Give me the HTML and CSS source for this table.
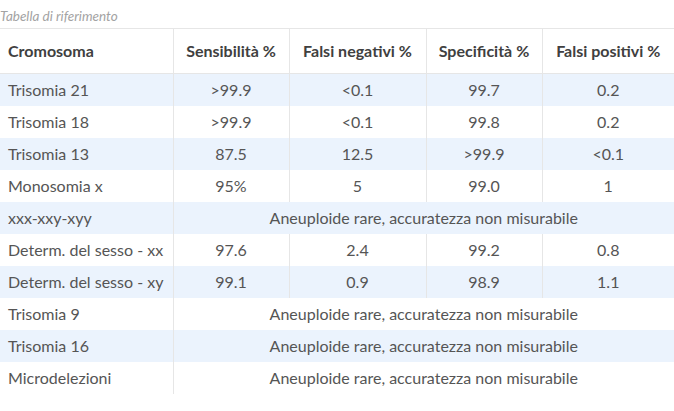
FILE: index.html
```html
<!DOCTYPE html>
<html lang="it">
<head>
<meta charset="utf-8">
<title>Tabella di riferimento</title>
<link rel="stylesheet" href="styles.css">
</head>
<body>
<table class="ref-table">
  <caption class="ref-caption">Tabella di riferimento</caption>
  <colgroup>
    <col class="c1"><col class="c2"><col class="c3"><col class="c4"><col class="c5">
  </colgroup>
  <thead>
    <tr>
      <th class="first">Cromosoma</th>
      <th>Sensibilità %</th>
      <th>Falsi negativi %</th>
      <th>Specificità %</th>
      <th>Falsi positivi %</th>
    </tr>
  </thead>
  <tbody>
    <tr><td class="first">Trisomia 21</td><td>&gt;99.9</td><td>&lt;0.1</td><td>99.7</td><td>0.2</td></tr>
    <tr><td class="first">Trisomia 18</td><td>&gt;99.9</td><td>&lt;0.1</td><td>99.8</td><td>0.2</td></tr>
    <tr><td class="first">Trisomia 13</td><td>87.5</td><td>12.5</td><td>&gt;99.9</td><td>&lt;0.1</td></tr>
    <tr><td class="first">Monosomia x</td><td>95%</td><td>5</td><td>99.0</td><td>1</td></tr>
    <tr><td class="first">xxx-xxy-xyy</td><td colspan="4">Aneuploide rare, accuratezza non misurabile</td></tr>
    <tr><td class="first">Determ. del sesso - xx</td><td>97.6</td><td>2.4</td><td>99.2</td><td>0.8</td></tr>
    <tr><td class="first">Determ. del sesso - xy</td><td>99.1</td><td>0.9</td><td>98.9</td><td>1.1</td></tr>
    <tr><td class="first">Trisomia 9</td><td colspan="4">Aneuploide rare, accuratezza non misurabile</td></tr>
    <tr><td class="first">Trisomia 16</td><td colspan="4">Aneuploide rare, accuratezza non misurabile</td></tr>
    <tr><td class="first">Microdelezioni</td><td colspan="4">Aneuploide rare, accuratezza non misurabile</td></tr>
  </tbody>
</table>
</body>
</html>
```
FILE: styles.css
```css
html, body {
  margin: 0;
  padding: 0;
  background: #ffffff;
}

body {
  font-family: Lato, "Open Sans", sans-serif;
  font-size: 16px;
  color: #555555;
}

.ref-table {
  width: 674px;
  border-collapse: collapse;
  table-layout: fixed;
}

.ref-caption {
  caption-side: top;
  text-align: left;
  font-style: italic;
  font-size: 13.5px;
  color: #a3a3a3;
  height: 28px;
  line-height: 32px;
  padding: 0;
  white-space: nowrap;
}

.c1 { width: 173px; }
.c2 { width: 116px; }
.c3 { width: 137px; }
.c4 { width: 116px; }
.c5 { width: 132px; }

.ref-table th {
  font-weight: 700;
  color: #404040;
  height: 44px;
  padding: 0 8px;
  line-height: 20px;
  text-align: center;
  border-top: 1px solid #e6e6e6;
  border-bottom: 1px solid #e6e6e6;
  border-left: 1px solid #e6e6e6;
  white-space: nowrap;
}

.ref-table td {
  height: 32px;
  padding: 0 8px;
  line-height: 20px;
  text-align: center;
  border-left: 1px solid #e6e6e6;
  white-space: nowrap;
  box-sizing: border-box;
}

.ref-table th.first,
.ref-table td.first {
  text-align: left;
  border-left: none;
}

.ref-table tbody tr:nth-child(odd) {
  background: #ebf3fd;
}
```
